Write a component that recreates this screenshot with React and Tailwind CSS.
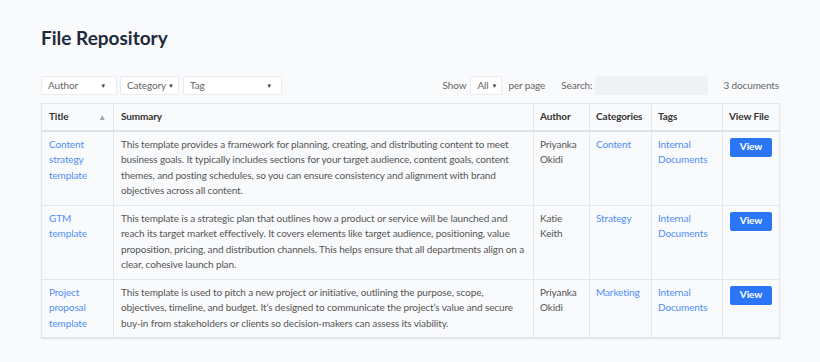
import React from "react";

const docs = [
  {
    id: 1,
    title: "Content strategy template",
    summary:
      "This template provides a framework for planning, creating, and distributing content to meet business goals. It typically includes sections for your target audience, content goals, content themes, and posting schedules, so you can ensure consistency and alignment with brand objectives across all content.",
    author: "Priyanka Okidi",
    category: "Content",
    tag: "Internal Documents",
  },
  {
    id: 2,
    title: "GTM template",
    summary:
      "This template is a strategic plan that outlines how a product or service will be launched and reach its target market effectively. It covers elements like target audience, positioning, value proposition, pricing, and distribution channels. This helps ensure that all departments align on a clear, cohesive launch plan.",
    author: "Katie Keith",
    category: "Strategy",
    tag: "Internal Documents",
  },
  {
    id: 3,
    title: "Project proposal template",
    summary:
      "This template is used to pitch a new project or initiative, outlining the purpose, scope, objectives, timeline, and budget. It\u2019s designed to communicate the project\u2019s value and secure buy-in from stakeholders or clients so decision-makers can assess its viability.",
    author: "Priyanka Okidi",
    category: "Marketing",
    tag: "Internal Documents",
  },
];

function Caret() {
  return <span className="text-[6px] leading-none text-[#444]">▼</span>;
}

function Select({ label, width, pr = "pr-[10px]", justify = "justify-between" }) {
  return (
    <div
      className={`flex h-[19px] items-center ${justify} gap-[2px] rounded-[2px] border border-[#e9ecf1] bg-white pl-[6px] ${pr} text-[#666] ${width}`}
    >
      <span>{label}</span>
      <Caret />
    </div>
  );
}

export default function App() {
  return (
    <div
      className="min-h-[362px] w-[820px] bg-[#f9fafc] px-[41px] pt-[24px] text-[10px] tracking-[-0.12px] text-[#555]"
      style={{ fontFamily: 'Lato, "Noto Sans", sans-serif' }}
    >
      <h1 className="text-[19px] font-bold leading-[28px] tracking-normal text-[#1e2a3b]">File Repository</h1>

      <div className="mt-[24px] flex items-center">
        <Select label="Author" width="w-[76px]" />
        <div className="ml-[3px]">
          <Select label="Category" width="w-[59px]" pr="pr-[6px]" justify="justify-start" />
        </div>
        <div className="ml-[4px]">
          <Select label="Tag" width="w-[99px]" pr="pr-[9px]" />
        </div>
        <div className="ml-auto flex items-center text-[#666]">
          <span>Show</span>
          <div className="ml-[4px] flex h-[19px] w-[32px] items-center gap-[3px] rounded-[2px] border border-[#e9ecf1] bg-white pl-[6px]">
            <span>All</span>
            <Caret />
          </div>
          <span className="ml-[6px]">per page</span>
          <span className="ml-[16px]">Search:</span>
          <div className="ml-[3px] h-[19px] w-[113px] rounded-[2px] bg-[#f0f1f3]" />
          <span className="ml-[15px]">3 documents</span>
        </div>
      </div>

      <table className="mt-[8px] w-[738px] table-fixed border-collapse border border-[#e3e7ed] shadow-[0_1px_1px_rgba(0,0,0,0.1)]">
        <colgroup>
          <col className="w-[72px]" />
          <col className="w-[420px]" />
          <col className="w-[56px]" />
          <col className="w-[62px]" />
          <col className="w-[71px]" />
          <col className="w-[57px]" />
        </colgroup>
        <thead>
          <tr className="border-b-2 border-[#dde2e8] text-left text-[#333]">
            <th className="h-[27px] border-r border-[#e3e7ed] px-[7px] font-bold">
              <div className="flex items-center justify-between">
                <span>Title</span>
                <span className="text-[8px] text-[#a0a4aa]">▲</span>
              </div>
            </th>
            <th className="border-r border-[#e3e7ed] px-[7px] font-bold">Summary</th>
            <th className="border-r border-[#e3e7ed] px-[6px] font-bold">Author</th>
            <th className="border-r border-[#e3e7ed] px-[6px] font-bold">Categories</th>
            <th className="border-r border-[#e3e7ed] px-[6px] font-bold">Tags</th>
            <th className="px-[6px] font-bold">View File</th>
          </tr>
        </thead>
        <tbody>
          {docs.map((doc) => (
            <tr key={doc.id} className="border-b border-[#e3e7ed] align-top leading-[15.5px]">
              <td className="border-r border-[#e3e7ed] px-[7px] pt-[5px] pb-[6px] text-[#4f8ef7]">{doc.title}</td>
              <td className="border-r border-[#e3e7ed] px-[7px] pt-[5px] pb-[6px]">{doc.summary}</td>
              <td className="border-r border-[#e3e7ed] px-[6px] pt-[5px]">{doc.author}</td>
              <td className="border-r border-[#e3e7ed] px-[6px] pt-[5px] text-[#4f8ef7]">{doc.category}</td>
              <td className="border-r border-[#e3e7ed] px-[6px] pt-[5px] text-[#4f8ef7]">{doc.tag}</td>
              <td className="px-[7px] pt-[6px]">
                <button className="h-[19px] w-[42px] rounded-[2px] bg-[#2a76f6] text-[10px] font-bold text-white">
                  View
                </button>
              </td>
            </tr>
          ))}
        </tbody>
      </table>
    </div>
  );
}
